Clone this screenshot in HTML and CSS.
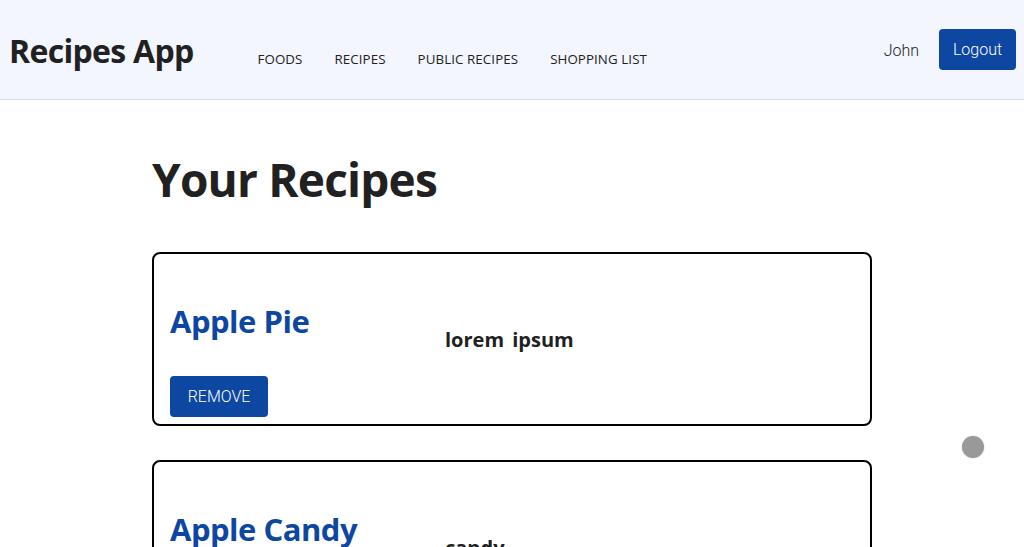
FILE: index.html
```html
<!DOCTYPE html>
<html>
<head>
<meta charset="utf-8">
<link rel="stylesheet" href="styles.css">
</head>
<body>
<header class="topbar">
  <div class="brand">Recipes App</div>
  <nav class="nav">
    <a class="nav-link">FOODS</a>
    <a class="nav-link">RECIPES</a>
    <a class="nav-link">PUBLIC RECIPES</a>
    <a class="nav-link">SHOPPING LIST</a>
  </nav>
  <div class="user">
    <span class="user-name">John</span>
    <button class="btn btn-logout">Logout</button>
  </div>
</header>
<main class="content">
  <h1 class="page-title">Your Recipes</h1>
  <div class="cards">
    <section class="card">
      <div class="card-main">
        <h2 class="card-title">Apple Pie</h2>
        <button class="btn btn-remove">REMOVE</button>
      </div>
      <p class="card-desc">lorem ipsum</p>
    </section>
    <section class="card">
      <div class="card-main">
        <h2 class="card-title">Apple Candy</h2>
        <button class="btn btn-remove">REMOVE</button>
      </div>
      <p class="card-desc">candy</p>
    </section>
  </div>
</main>
<div class="float-dot"></div>
</body>
</html>
```
FILE: styles.css
```css
html, body {
  margin: 0;
  padding: 0;
  height: 547px;
  overflow: hidden;
  background: #ffffff;
  font-family: "Open Sans", "Noto Sans", sans-serif;
  color: #212121;
}

.topbar {
  height: 99px;
  border-bottom: 1px solid #dcdde3;
  background: #f3f6fe;
  display: flex;
  align-items: center;
  padding: 0 8px 0 9px;
}

.brand {
  font-size: 32px;
  font-weight: 700;
  color: #212121;
  letter-spacing: -0.7px;
  margin-top: 2px;
}

.nav {
  display: flex;
  gap: 32px;
  margin-left: 64px;
  margin-top: 19px;
}

.nav-link {
  font-size: 13.3px;
  color: #212121;
  letter-spacing: 0.1px;
}

.user {
  margin-left: auto;
  display: flex;
  align-items: center;
  gap: 20px;
}

.user-name {
  font-family: Roboto, sans-serif;
  font-weight: 300;
  font-size: 16px;
  color: #222;
  margin-top: 2px;
}

.btn {
  font-family: Roboto, sans-serif;
  font-weight: 300;
  border: none;
  color: #fff;
  background: #0d47a1;
  border-radius: 4px;
  font-size: 16px;
  height: 41px;
  cursor: pointer;
}

.btn-logout {
  width: 77px;
  padding: 0;
  margin-top: -1px;
}

.content {
  width: 720px;
  margin: 0 auto;
}

.page-title {
  font-size: 46px;
  font-weight: 700;
  margin: 47px 0 41px;
  letter-spacing: -0.8px;
  line-height: 64px;
}

.cards {
  display: flex;
  flex-direction: column;
  gap: 34px;
}

.card {
  border: 2px solid #000;
  border-radius: 8px;
  height: 174px;
  box-sizing: border-box;
  display: flex;
  align-items: center;
  padding: 0 16px;
}

.card-main {
  width: 275px;
  align-self: stretch;
  display: flex;
  flex-direction: column;
  justify-content: flex-end;
  padding-bottom: 7px;
}

.card-title {
  margin: 0 0 35px;
  font-size: 31px;
  font-weight: 700;
  color: #0d47a1;
  letter-spacing: -0.5px;
  line-height: 40px;
}

.btn-remove {
  width: 98px;
  padding: 0;
}

.card-desc {
  margin: 0;
  font-size: 20px;
  font-weight: 700;
  color: #212121;
  word-spacing: 3px;
}

.float-dot {
  position: absolute;
  left: 962px;
  top: 436px;
  width: 22px;
  height: 22px;
  border-radius: 50%;
  background: #999;
  box-shadow: 0 0 2px rgba(0,0,0,0.2);
}
```
